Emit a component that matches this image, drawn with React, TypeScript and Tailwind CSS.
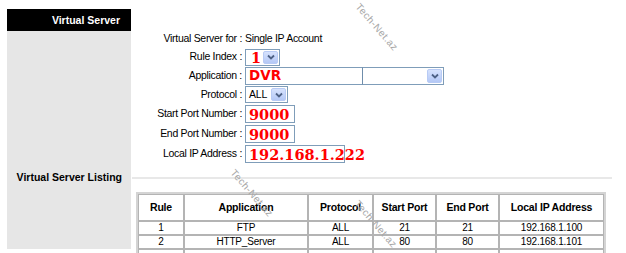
import React from "react";

const Arrow = () => (
  <div className="ml-auto mr-px my-px w-[15px] shrink-0 self-stretch rounded-[2px] border border-[#b8cbf5] bg-gradient-to-b from-[#d6e2fd] to-[#b4c8f6] flex items-center justify-center">
    <svg width="8" height="6" viewBox="0 0 8 6">
      <path d="M1 1.5 L4 4.5 L7 1.5" fill="none" stroke="#4d6185" strokeWidth="1.8" />
    </svg>
  </div>
);

const Row = ({ label, h, children }: { label: string; h: string; children?: React.ReactNode }) => (
  <div className={`flex items-center ${h}`}>
    <div className="w-[111px] text-right text-[10.5px] tracking-[-0.3px] text-black whitespace-nowrap">{label}</div>
    <div className="ml-[3px] flex items-center">{children}</div>
  </div>
);

const redSerif = "font-['DejaVu_Serif',serif] font-bold text-[#ff0000] text-[14.5px] leading-none whitespace-nowrap";

const Watermark = ({ pos }: { pos: string }) => (
  <div
    className={`absolute ${pos} -translate-x-1/2 -translate-y-1/2 rotate-[49deg] text-[10px] tracking-[0.5px] text-[#a8a8a8] whitespace-nowrap font-['Liberation_Sans',sans-serif] pointer-events-none`}
  >
    Tech-Net.az
  </div>
);

export default function App() {
  const rows = [
    ["1", "FTP", "ALL", "21", "21", "192.168.1.100"],
    ["2", "HTTP_Server", "ALL", "80", "80", "192.168.1.101"],
  ];
  return (
    <div className="relative w-[626px] h-[253px] bg-white overflow-hidden font-['Liberation_Sans',Arial,sans-serif]">
      <div className="flex pl-[7px] pt-[9px]">
        <div className="w-[124px] h-[240px] flex flex-col">
          <div className="h-[22px] bg-black text-white font-bold text-[10.5px] text-right pr-[11px] leading-[22px]">
            Virtual Server
          </div>
          <div className="flex-1 bg-[#e6e6e6] pt-[140px] pr-[9px] text-right font-bold text-[10.5px] leading-[13px] text-black">
            Virtual Server Listing
          </div>
        </div>
        <div className="w-[481px]">
          <div className="pt-[21px]">
            <div className="flex items-center h-[18px]">
              <div className="w-[111px] text-right text-[10.5px] tracking-[-0.3px] whitespace-nowrap">Virtual Server for :</div>
              <div className="ml-[3px] text-[10.5px] tracking-[-0.3px] whitespace-nowrap">Single IP Account</div>
            </div>
            <Row label="Rule Index :" h="h-[18px]">
              <div className="flex w-[35px] h-[17px] border border-[#7f9db9] bg-white items-center">
                <span className={`${redSerif} pl-[5px] pt-[2px]`}>1</span>
                <Arrow />
              </div>
            </Row>
            <Row label="Application :" h="h-[19px]">
              <div className="flex items-center">
                <div className="w-[118px] h-[18px] border border-[#7f9db9] bg-white flex items-center pl-[3px]">
                  <span className="font-['DejaVu_Sans',sans-serif] font-bold text-[13.5px] leading-none text-[#ff0000] pt-px">DVR</span>
                </div>
                <div className="flex w-[82px] h-[18px] border border-[#7f9db9] border-l-[#6f8dab] bg-white -ml-px">
                  <Arrow />
                </div>
              </div>
            </Row>
            <Row label="Protocol :" h="h-[19px]">
              <div className="flex w-[43px] h-[17px] border border-[#7f9db9] bg-white items-center">
                <span className="pl-[3px] text-[10.5px] tracking-[-0.2px]">ALL</span>
                <Arrow />
              </div>
            </Row>
            <Row label="Start Port Number :" h="h-[20px]">
              <div className="w-[50px] h-[18px] border border-[#7f9db9] bg-white flex items-center pl-[3px]">
                <span className={`${redSerif} pt-[2px]`}>9000</span>
              </div>
            </Row>
            <Row label="End Port Number :" h="h-[20px]">
              <div className="w-[50px] h-[18px] border border-[#7f9db9] bg-white flex items-center pl-[3px]">
                <span className={`${redSerif} pt-[2px]`}>9000</span>
              </div>
            </Row>
            <Row label="Local IP Address :" h="h-[20px]">
              <div className="w-[100px] h-[18px] border border-[#7f9db9] bg-white flex items-center pl-[3px] overflow-visible">
                <span className={`${redSerif} pt-[2px] relative`}>192.168.1.222</span>
              </div>
            </Row>
          </div>
          <div className="mt-[13px] ml-px w-[480px] h-[2px] bg-[#e8e8e8]" />
          <div className="mt-[13px] ml-[5px]">
            <table className="border-separate border-spacing-0 border-2 border-[#d4d4d4] w-[470px] text-center">
              <colgroup>
                <col className="w-[46px]" />
                <col className="w-[124px]" />
                <col className="w-[65px]" />
                <col className="w-[63px]" />
                <col className="w-[63px]" />
                <col />
              </colgroup>
              <thead>
                <tr className="h-[27px]">
                  {["Rule", "Application", "Protocol", "Start Port", "End Port", "Local IP Address"].map((h) => (
                    <th key={h} className="border border-[#b4b4b4] font-bold text-[10.5px] tracking-[-0.2px] p-0 whitespace-nowrap">
                      {h}
                    </th>
                  ))}
                </tr>
              </thead>
              <tbody>
                {rows.map((r) => (
                  <tr key={r[0]} className="h-[14px]">
                    {r.map((c, i) => (
                      <td key={i} className="border border-[#b4b4b4] text-[10px] tracking-[-0.2px] leading-[12px] p-0">
                        {c}
                      </td>
                    ))}
                  </tr>
                ))}
                <tr className="h-[14px]">
                  {[0, 1, 2, 3, 4, 5].map((i) => (
                    <td key={i} className="border border-[#b4b4b4] p-0" />
                  ))}
                </tr>
              </tbody>
            </table>
          </div>
        </div>
      </div>
      <Watermark pos="left-[377px] top-[27px]" />
      <Watermark pos="left-[252px] top-[193px]" />
      <Watermark pos="left-[376px] top-[224px]" />
    </div>
  );
}
